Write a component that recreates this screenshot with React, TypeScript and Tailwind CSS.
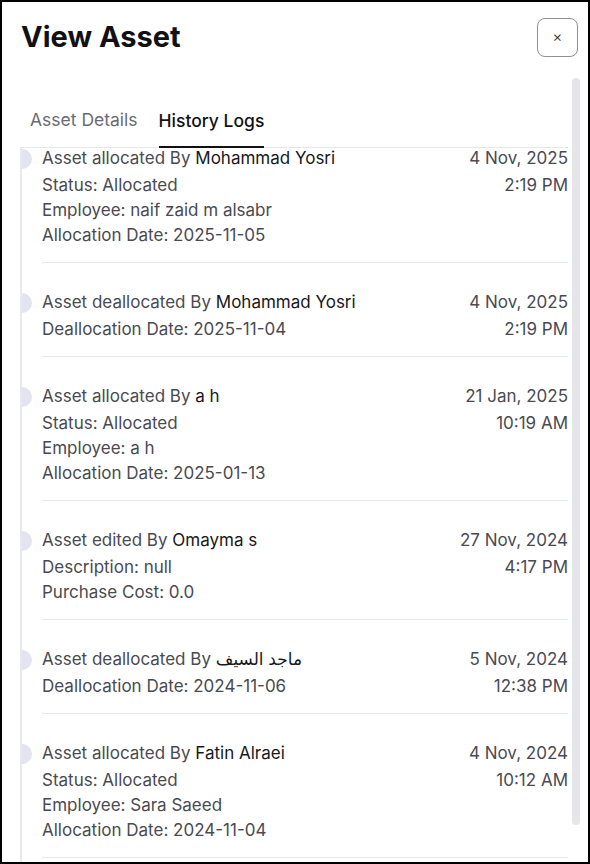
import { FC } from "react";

interface LogItem {
  action: string;
  by: string;
  lines: string[];
  date: string;
  time: string;
}

const logs: LogItem[] = [
  {
    action: "Asset allocated By",
    by: "Mohammad Yosri",
    lines: ["Status: Allocated", "Employee: naif zaid m alsabr", "Allocation Date: 2025-11-05"],
    date: "4 Nov, 2025",
    time: "2:19 PM",
  },
  {
    action: "Asset deallocated By",
    by: "Mohammad Yosri",
    lines: ["Deallocation Date: 2025-11-04"],
    date: "4 Nov, 2025",
    time: "2:19 PM",
  },
  {
    action: "Asset allocated By",
    by: "a h",
    lines: ["Status: Allocated", "Employee: a h", "Allocation Date: 2025-01-13"],
    date: "21 Jan, 2025",
    time: "10:19 AM",
  },
  {
    action: "Asset edited By",
    by: "Omayma s",
    lines: ["Description: null", "Purchase Cost: 0.0"],
    date: "27 Nov, 2024",
    time: "4:17 PM",
  },
  {
    action: "Asset deallocated By",
    by: "ماجد السيف",
    lines: ["Deallocation Date: 2024-11-06"],
    date: "5 Nov, 2024",
    time: "12:38 PM",
  },
  {
    action: "Asset allocated By",
    by: "Fatin Alraei",
    lines: ["Status: Allocated", "Employee: Sara Saeed", "Allocation Date: 2024-11-04"],
    date: "4 Nov, 2024",
    time: "10:12 AM",
  },
];

const LogRow: FC<{ item: LogItem }> = ({ item }) => (
  <div className="flex flex-row pt-[27px]">
    <div className="w-[10px] h-[20px] mt-[3px] rounded-r-full bg-[#e3e3f1] shrink-0" />
    <div className="ml-[10px] flex-1 flex flex-row justify-between border-b border-[#e5e7eb] pb-[14px]">
      <div className="flex flex-col">
        <div className="leading-[25px] text-[#4a4a52]">
          {item.action} <span className="text-[#18181b]">{item.by}</span>
        </div>
        <div className="mt-[2px] flex flex-col">
          {item.lines.map((line, i) => (
            <div key={i} className="leading-[25px] text-[#4a4a52]">
              {line}
            </div>
          ))}
        </div>
      </div>
      <div className="flex flex-col items-end text-[#4a4a52]">
        <div className="leading-[25px]">{item.date}</div>
        <div className="leading-[25px] mt-[2px]">{item.time}</div>
      </div>
    </div>
  </div>
);

export default function App() {
  return (
    <div className="w-[590px] h-[864px] border-2 border-black bg-white overflow-hidden flex flex-col font-['Inter','Noto_Sans','DejaVu_Sans',sans-serif]">
      <div className="flex flex-row justify-between items-start pl-[19px] pr-[10px] pt-[16px] h-[76px] shrink-0">
        <h1 className="text-[29px] leading-[36px] font-bold text-[#111114] mt-[1px]">View Asset</h1>
        <button className="w-[41px] h-[39px] rounded-lg border border-[#8f8f96] flex items-center justify-center text-[15px] font-light text-[#222]">
          ×
        </button>
      </div>

      <div className="flex-1 flex flex-row min-h-0">
        <div className="flex-1 flex flex-col pl-[18px] pt-[30px] min-h-0">
          <div className="flex flex-row gap-[21px] pl-[10px] border-b border-[#e5e7eb]">
            <button className="text-[17.5px] leading-[24px] pb-[15px] text-[#6b6b73]">Asset Details</button>
            <button className="text-[17.5px] leading-[24px] pb-[13px] font-medium text-[#111114] border-b-2 border-[#111114] -mb-px">
              History Logs
            </button>
          </div>
          {/* list is shown scrolled down a little */}
          <div className="flex-1 min-h-0 overflow-hidden border-l-2 border-[#e8e8ef] text-[17px]">
            <div className="-mt-[29px]">
              {logs.map((item, i) => (
                <LogRow key={i} item={item} />
              ))}
            </div>
          </div>
        </div>
        <div className="w-[8px] ml-[4px] mr-[8px] flex flex-col">
          <div className="h-[747px] rounded-full bg-[#e4e6ea]" />
        </div>
      </div>
    </div>
  );
}
